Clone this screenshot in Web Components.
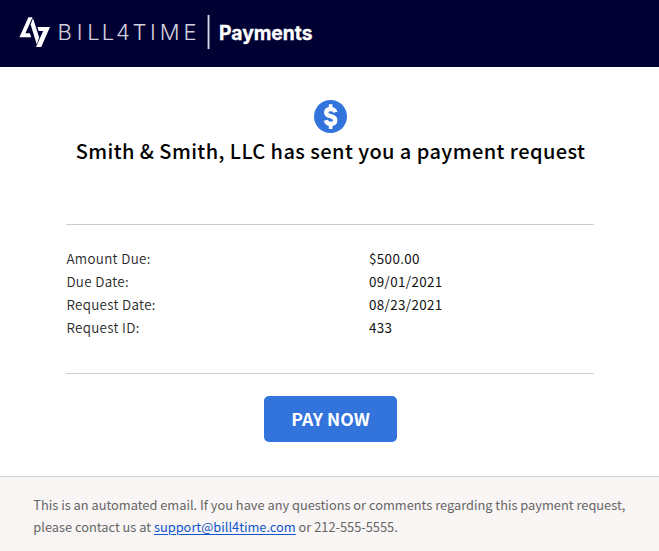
<!DOCTYPE html>
<html lang="en">
<head>
<meta charset="utf-8">
<title>Payment request</title>
<style>
html,body{margin:0;height:100%;background:#fff}
body{font-family:"Noto Sans CJK SC","Noto Sans",sans-serif}
</style>
</head>
<body>
<payment-email></payment-email>
<script>
const define = (name, html) => customElements.define(name, class extends HTMLElement {
  constructor() {
    super();
    this.attachShadow({ mode: 'open' }).innerHTML = html;
  }
});

define('brand-header', `<style>
:host{display:block;height:67px;background:#000033}
svg{display:block}
</style>
<svg width="330" height="67" viewBox="0 0 330 67">
  <g fill="#fff">
    <path d="M28.4 17.2H32.6L25.4 33.2H29.9L31.2 37.2H19.4Z"/>
    <path d="M30.6 24.4L33 18.2L39.2 37.6L36.8 44.4Z"/>
    <path d="M37.4 26.9H50L41.2 46.9H36L43.2 31H38.6Z"/>
    <rect x="207.6" y="15" width="1.9" height="34" fill="#d4d4de"/>
  </g>
  <text x="57.6 76.8 87.2 101.8 116 132.6 150 159.8 183.4" y="40.3" font-family="Inter,sans-serif" font-weight="300" font-size="22" fill="#d2d2de">BILL4TIME</text>
  <text x="219" y="40" font-family="Inter,sans-serif" font-weight="700" font-size="19.4" fill="#fff" stroke="#fff" stroke-width=".3" textLength="93.6" lengthAdjust="spacingAndGlyphs">Payments</text>
</svg>`);

define('dollar-badge', `<style>
:host{display:block;width:33px;height:33px}
svg{display:block}
</style>
<svg width="33" height="33" viewBox="0 0 33 33">
  <circle cx="16.5" cy="16.5" r="16.5" fill="#3273dc"/>
  <path d="M21.4 12.2C20.8 9.9 19.2 9.1 16.8 9.1C13.9 9.1 12.2 10.3 12.2 12.4C12.2 14.8 13.9 15.5 16.7 16.2C19.8 17 21.3 17.9 21.3 20.3C21.3 22.6 19.5 23.9 16.8 23.9C14 23.9 12.4 22.7 11.8 20.3" fill="none" stroke="#fff" stroke-width="4.3"/>
  <path d="M14.8 4.2h3.7v4h-3.7zM14.8 25h3.7v4h-3.7z" fill="#fff"/>
</svg>`);

define('detail-row', `<style>
:host{display:grid;grid-template-columns:303px 1fr;height:23px;line-height:23px;font-size:13.4px}
.label{font-weight:350;color:#2a2a2a;letter-spacing:.32px;padding-left:.4px}
.value{font-weight:400;color:#111;letter-spacing:.37px}
</style>
<span class="label"><slot name="label"></slot></span><span class="value"><slot></slot></span>`);

define('detail-list', `<style>
:host{display:flex;flex-direction:column;box-sizing:border-box;height:150px;padding-top:22px;border:solid #ccc;border-width:1px 0}
</style><slot></slot>`);

define('pay-button', `<style>
:host{display:block}
button{display:block;width:133px;height:46px;padding:0 0 0 1px;border:0;border-radius:5px;background:#3273dc;color:#fff;font:700 17.6px/46px "Noto Sans CJK SC",sans-serif}
</style><button><slot></slot></button>`);

define('email-footer', `<style>
:host{display:block;box-sizing:border-box;height:75px;padding:17px 0 0 33.3px;border-top:1px solid #ccc;background:#f8f5f4;color:#666;font-size:12.82px;line-height:22px;white-space:nowrap}
</style><slot></slot>`);

define('payment-email', `<style>
:host{display:flex;flex-direction:column;width:659px;height:551px}
main{flex:1;display:flex;flex-direction:column;align-items:center;padding:33px 65px 0 66px}
h1{margin:2px 0 58px;padding-left:1.2px;font-size:20px;line-height:31px;font-weight:500;letter-spacing:.42px;color:#000;white-space:nowrap}
detail-list{align-self:stretch}
pay-button{margin-top:22px}
a{color:#1155cc;text-decoration:underline;text-underline-offset:2px}
</style>
<brand-header></brand-header>
<main>
  <dollar-badge></dollar-badge>
  <h1>Smith &amp; Smith, LLC has sent you a payment request</h1>
  <detail-list>
    <detail-row><span slot="label">Amount Due:</span>$500.00</detail-row>
    <detail-row><span slot="label">Due Date:</span>09/01/2021</detail-row>
    <detail-row><span slot="label">Request Date:</span>08/23/2021</detail-row>
    <detail-row><span slot="label">Request ID:</span>433</detail-row>
  </detail-list>
  <pay-button>PAY NOW</pay-button>
</main>
<email-footer>This is an automated email. If you have any questions or comments regarding this payment request,<br>please contact us at <a href="mailto:support@bill4time.com">support@bill4time.com</a> or 212-555-5555.</email-footer>`);
</script>
</body>
</html>
